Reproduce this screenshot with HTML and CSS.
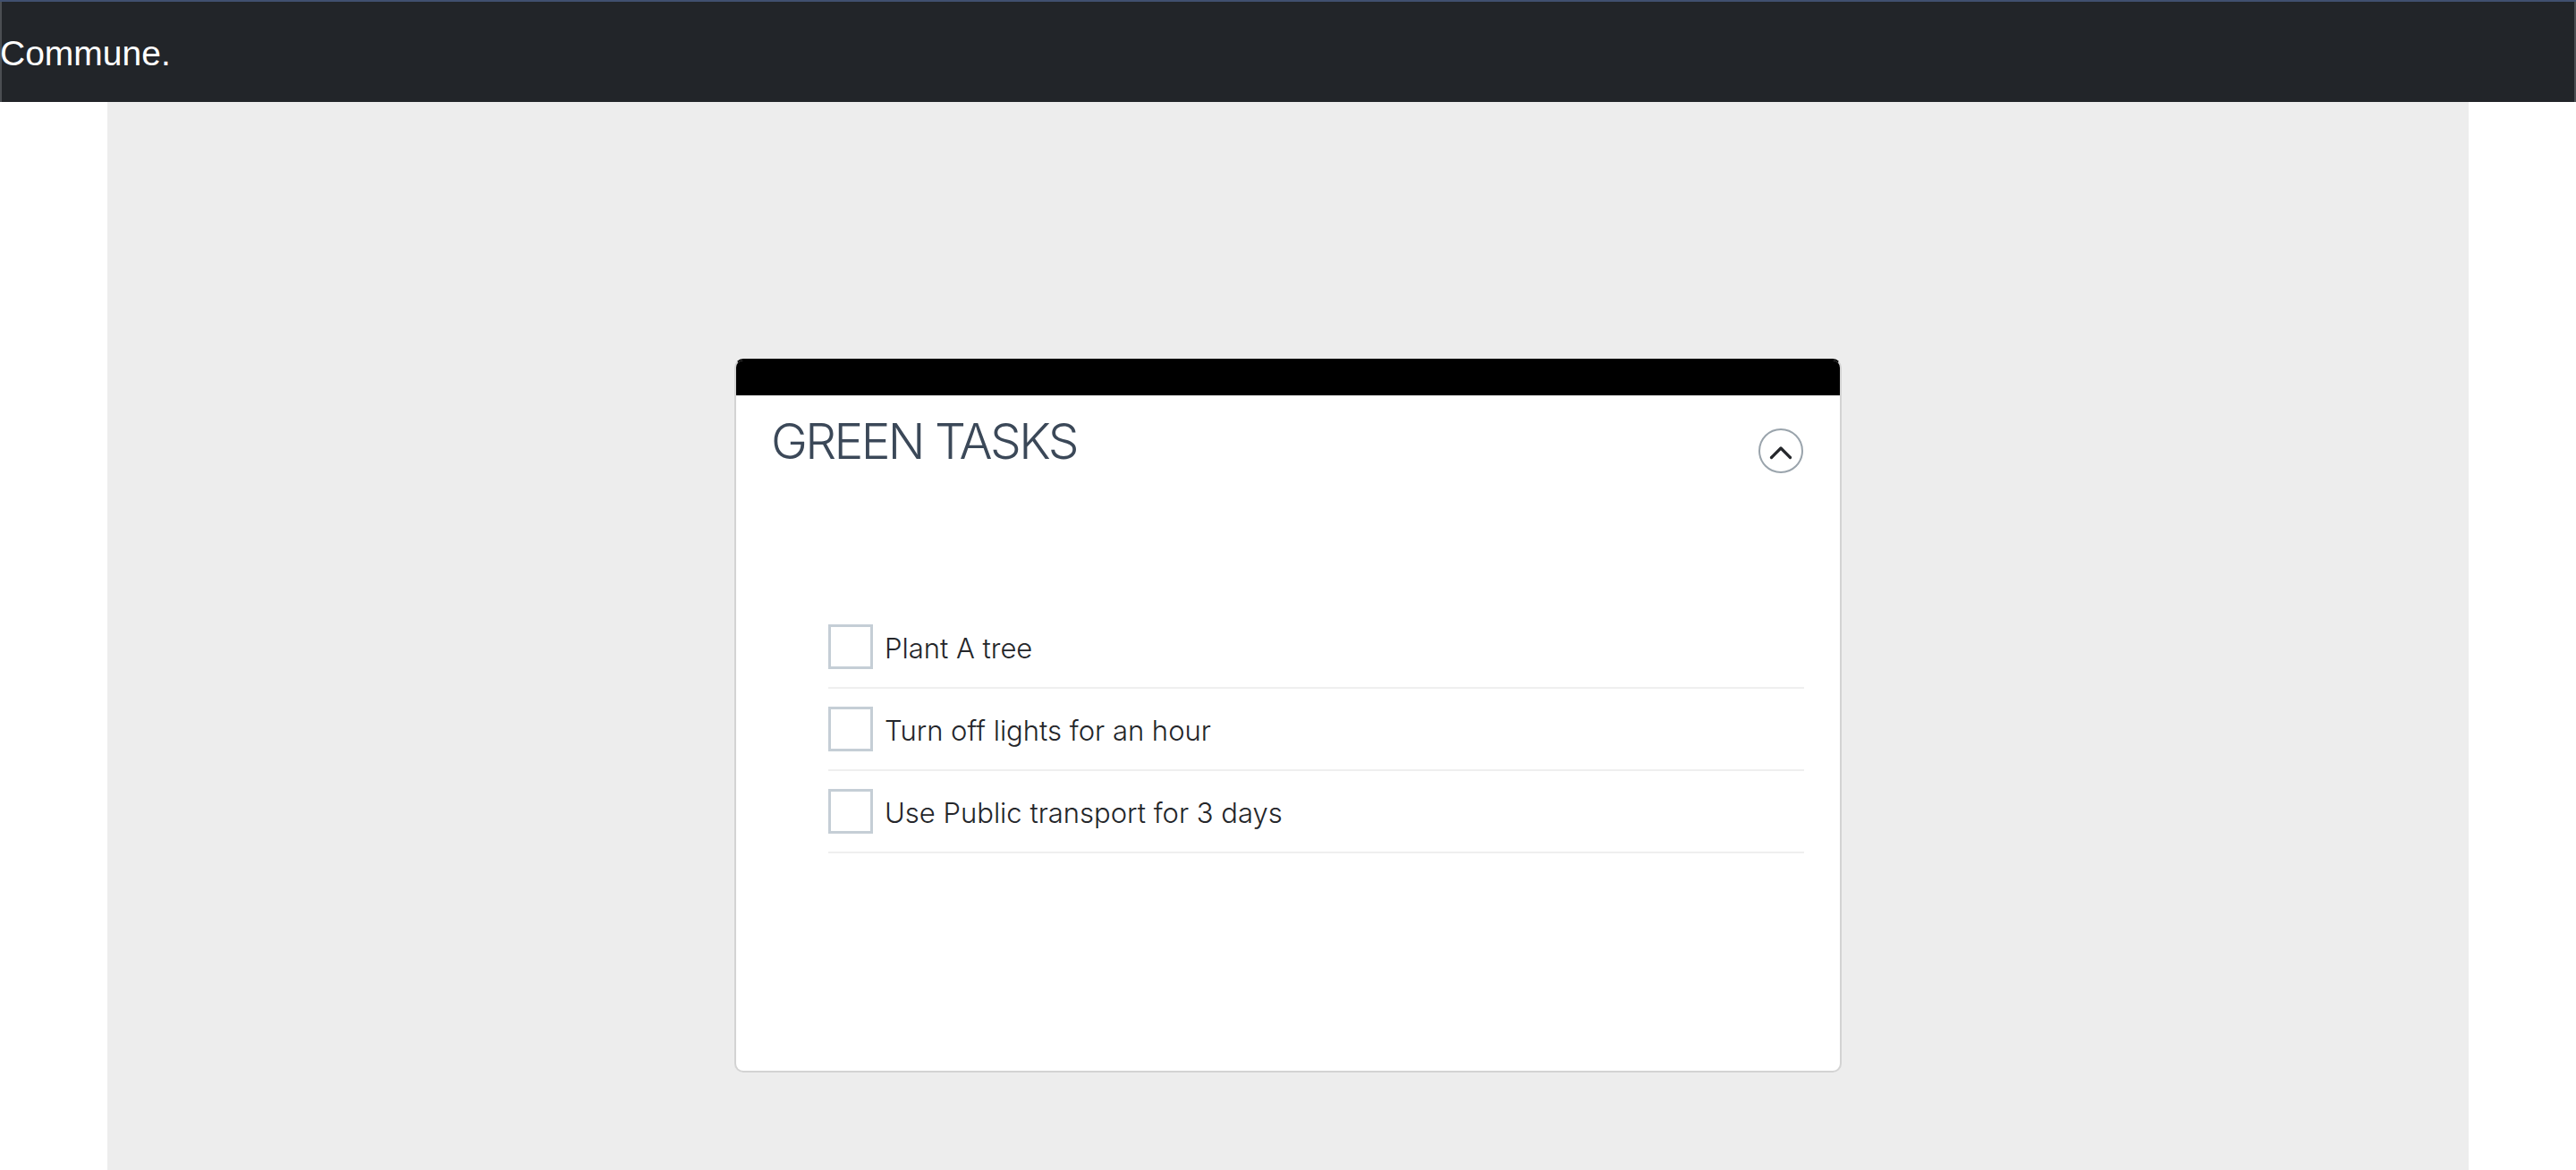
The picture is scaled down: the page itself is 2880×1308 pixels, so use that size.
FILE: index.html
```html
<!DOCTYPE html>
<html lang="en">
<head>
<meta charset="utf-8">
<title>Commune.</title>
<link rel="stylesheet" href="styles.css">
</head>
<body>
<header class="topbar">
  <span class="brand">Commune.</span>
</header>
<main class="main">
  <section class="card">
    <div class="card-band"></div>
    <div class="card-body">
      <div class="card-head">
        <h1 class="card-title">GREEN TASKS</h1>
        <button class="toggle" type="button" aria-label="Collapse">
          <svg width="50" height="50" viewBox="0 0 50 50">
            <circle cx="25" cy="25" r="24" fill="none" stroke="#9aa4ac" stroke-width="2"/>
            <polyline points="14.5,32.5 25,22 35.5,32.5" fill="none" stroke="#25272b" stroke-width="3.2" stroke-linecap="round" stroke-linejoin="round"/>
          </svg>
        </button>
      </div>
      <ul class="tasks">
        <li class="task"><input class="check" type="checkbox"><span class="task-label">Plant A tree</span></li>
        <li class="task"><input class="check" type="checkbox"><span class="task-label">Turn off lights for an hour</span></li>
        <li class="task"><input class="check" type="checkbox"><span class="task-label">Use Public transport for 3 days</span></li>
      </ul>
    </div>
  </section>
</main>
</body>
</html>
```

FILE: styles.css
```css
* { box-sizing: border-box; }

html, body {
  margin: 0;
  padding: 0;
  background: #ffffff;
}

body {
  font-family: "Liberation Sans", Arial, sans-serif;
}

.topbar {
  height: 114px;
  background: #222529;
  border-top: 2px solid #40506f;
  box-shadow: inset 2px 0 0 #4b4e52, inset -2px 0 0 #4b4e52;
  display: flex;
  align-items: center;
  padding: 0;
}

.brand {
  color: #ffffff;
  font-family: "Liberation Sans", Arial, sans-serif;
  font-size: 39px;
  line-height: 1;
  margin-top: 2px;
}

.main {
  margin: 0 120px;
  min-height: 1194px;
  background: #ededed;
  padding-top: 287px;
  display: flex;
  flex-direction: column;
  align-items: center;
}

.card {
  width: 1238px;
  height: 798px;
  background: #ffffff;
  border: 2px solid #d3d3d3;
  border-top-color: #000000;
  border-radius: 10px;
  overflow: hidden;
}

.card-band {
  height: 39px;
  background: #000000;
}

.card-body {
  padding: 20px 40px 0 39px;
}

.card-head {
  display: flex;
  justify-content: space-between;
  align-items: flex-start;
}

.card-title {
  margin: 0;
  font-family: Inter, "Open Sans", sans-serif;
  font-weight: 300;
  font-size: 55px;
  line-height: 62px;
  letter-spacing: -2.6px;
  color: #3b4858;
}

.toggle {
  margin: 17px 1px 0 0;
  padding: 0;
  border: 0;
  background: transparent;
  width: 50px;
  height: 50px;
  display: block;
}

.toggle svg { display: block; }

.tasks {
  list-style: none;
  margin: 149px 0 0 64px;
  padding: 0;
}

.task {
  display: flex;
  align-items: center;
  gap: 13px;
  padding: 20px 0;
  border-bottom: 2px solid #efefef;
}

.check {
  appearance: none;
  -webkit-appearance: none;
  margin: 0;
  width: 50px;
  height: 50px;
  border: 3px solid #c5ced6;
  background: #ffffff;
  border-radius: 0;
  flex: none;
}

.task-label {
  font-family: Inter, "Open Sans", sans-serif;
  font-weight: 300;
  font-size: 31px;
  line-height: 40px;
  color: #24262a;
  position: relative;
  top: 2px;
}
```
